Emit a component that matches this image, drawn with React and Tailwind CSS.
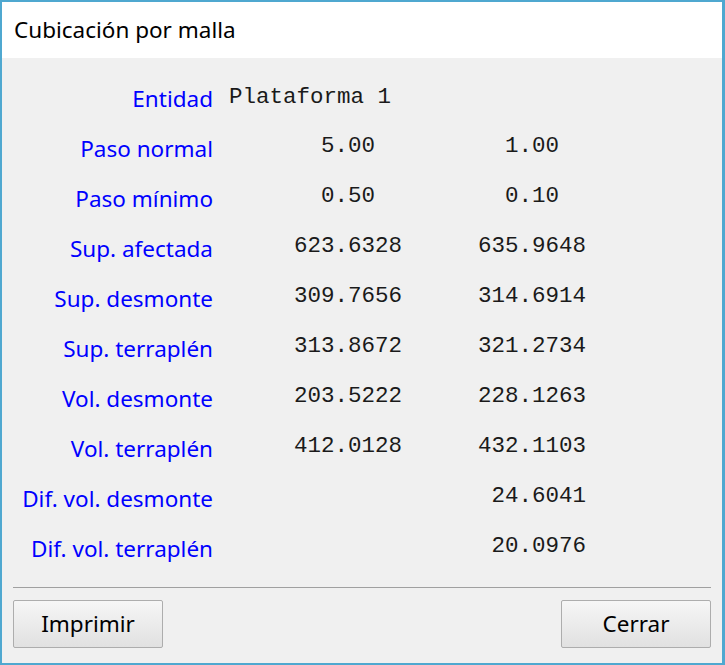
const rows = [
  { label: 'Paso normal', a: '5.00', b: '1.00' },
  { label: 'Paso mínimo', a: '0.50', b: '0.10' },
  { label: 'Sup. afectada', a: '623.6328', b: '635.9648' },
  { label: 'Sup. desmonte', a: '309.7656', b: '314.6914' },
  { label: 'Sup. terraplén', a: '313.8672', b: '321.2734' },
  { label: 'Vol. desmonte', a: '203.5222', b: '228.1263' },
  { label: 'Vol. terraplén', a: '412.0128', b: '432.1103' },
  { label: 'Dif. vol. desmonte', a: '', b: ' 24.6041' },
  { label: 'Dif. vol. terraplén', a: '', b: ' 20.0976' },
]

const uiFont = "font-['Noto_Sans',sans-serif]"
const monoFont = "font-['Liberation_Mono',monospace]"

function Label({ children }) {
  return (
    <div className={`w-[211px] shrink-0 text-right text-[22.5px] text-[#0000ff] ${uiFont}`}>
      {children}
    </div>
  )
}

function DialogButton({ children }) {
  return (
    <button className="h-[48px] w-[150px] rounded-[2px] border border-[#adadad] bg-gradient-to-b from-[#f6f6f6] to-[#e1e1e1] text-[22.5px] text-black">
      {children}
    </button>
  )
}

export default function App() {
  return (
    <div className={`flex h-[665px] w-[725px] flex-col border-2 border-r-[3px] border-[#4fa8d0] bg-[#f0f0f0] ${uiFont}`}>
      <div className="flex h-[56px] items-center bg-white pl-[12px] text-[22.5px] text-black">
        Cubicación por malla
      </div>

      <div className="flex flex-col pt-[16px]">
        <div className="flex h-[50px] items-center">
          <Label>Entidad</Label>
          <div className={`ml-[16px] -mt-[3px] whitespace-pre text-[22.5px] text-[#1a1a1a] ${monoFont}`}>Plataforma 1</div>
        </div>
        {rows.map((r) => (
          <div key={r.label} className="flex h-[50px] items-center">
            <Label>{r.label}</Label>
            <div className={`ml-[65px] -mt-[5px] w-[140px] whitespace-pre text-center text-[22.5px] text-[#1a1a1a] ${monoFont}`}>{r.a}</div>
            <div className={`ml-[44px] -mt-[5px] w-[140px] whitespace-pre text-center text-[22.5px] text-[#1a1a1a] ${monoFont}`}>{r.b}</div>
          </div>
        ))}
      </div>

      <div className="mx-[11px] mt-[13px] border-t border-[#a0a0a0]" />

      <div className="flex justify-between pl-[11px] pr-[11px] pt-[12px]">
        <DialogButton>Imprimir</DialogButton>
        <DialogButton>Cerrar</DialogButton>
      </div>
    </div>
  )
}
